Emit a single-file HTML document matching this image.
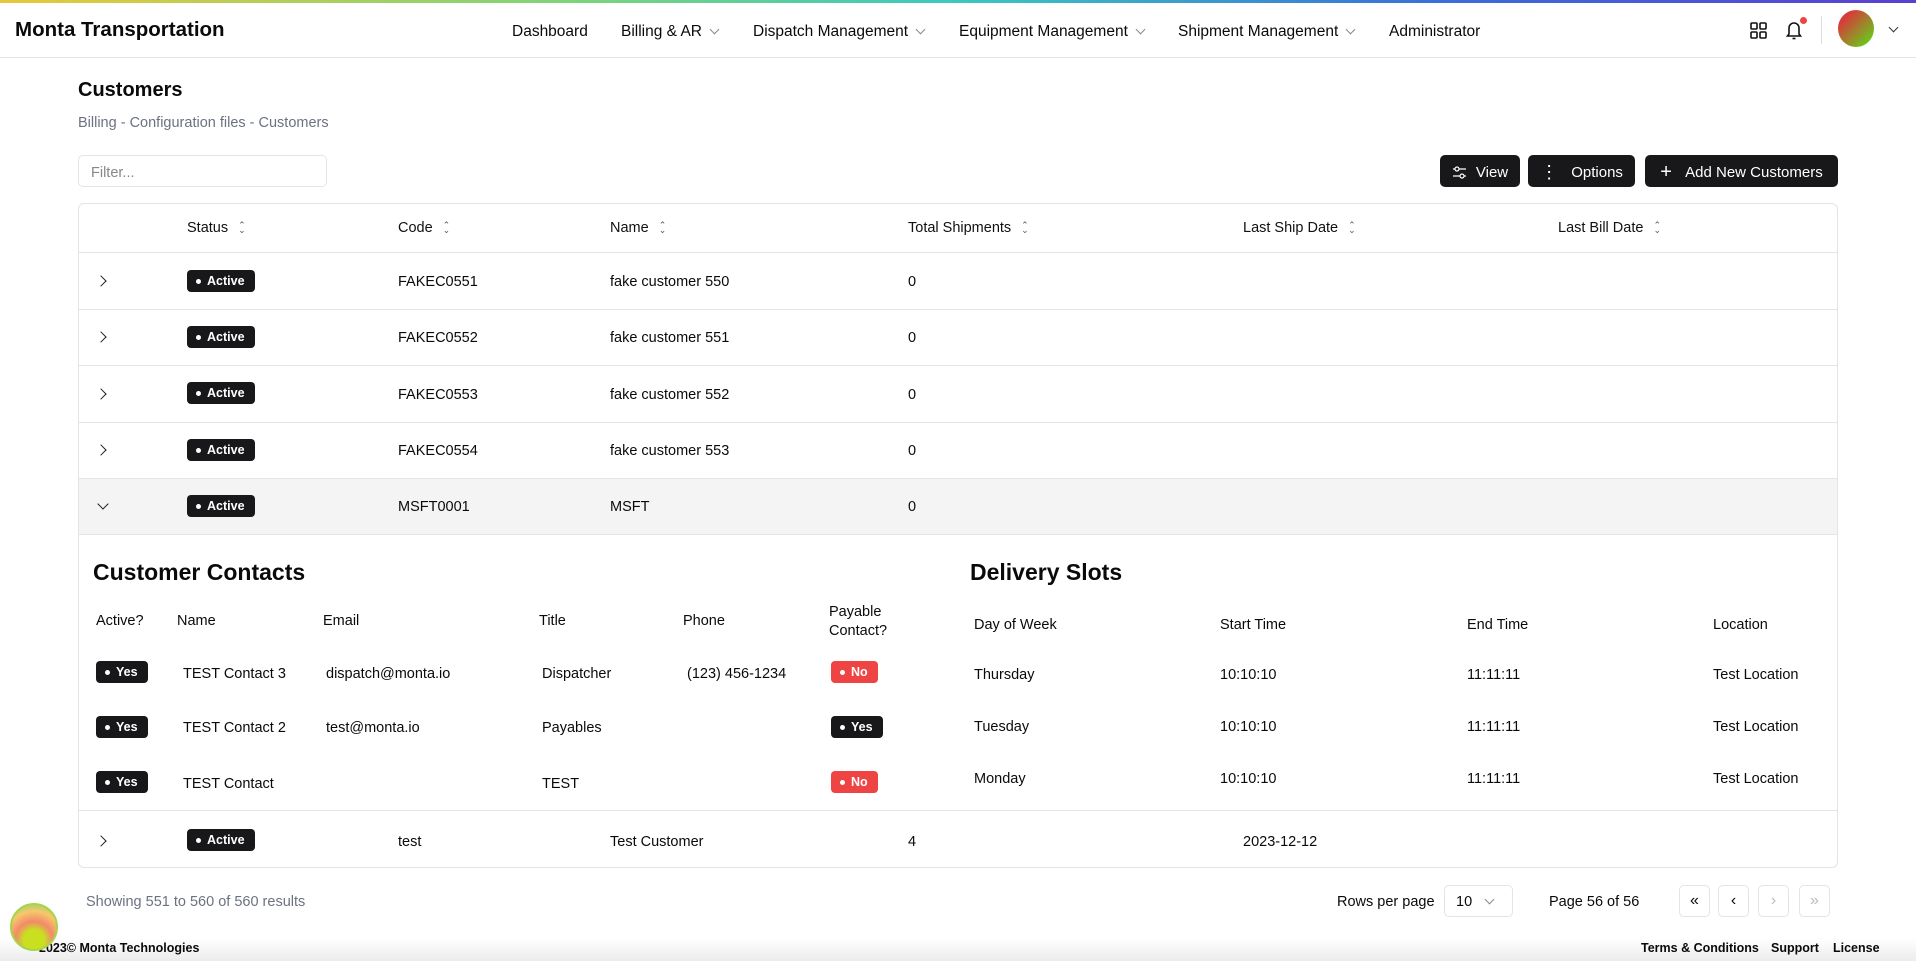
<!DOCTYPE html>
<html><head><meta charset="utf-8"><style>
*{box-sizing:border-box;margin:0;padding:0}
body{width:1916px;height:961px;overflow:hidden;background:#fff;font-family:"Liberation Sans",sans-serif;color:#0a0a0a;position:relative;font-size:15px}
.abs{position:absolute;white-space:nowrap}
.topbar{position:absolute;left:0;top:0;width:1916px;height:3px;background:linear-gradient(90deg,#e8c83a,#7cd47a 30%,#3cc7c0 50%,#3a6fd8 75%,#5b3fd0)}
.hdr{position:absolute;left:0;top:0;width:1916px;height:58px;border-bottom:1px solid #e4e4e7}
.nav{font-size:15.5px;top:23px}
.chev{display:inline-block;width:7px;height:7px;border-right:1.3px solid #888;border-bottom:1.3px solid #888;transform:rotate(45deg);margin-left:9px;position:relative;top:-3px}
.btn{position:absolute;top:155px;height:32px;background:#18181b;color:#fff;border-radius:5px;font-size:15px;display:flex;align-items:center;justify-content:center;gap:9px;padding-top:2px}
.tbl{position:absolute;left:78px;top:203px;width:1760px;height:665px;border:1px solid #e4e4e7;border-radius:6px;overflow:hidden}
.hr{position:absolute;left:0;width:1760px;border-top:1px solid #e4e4e7}
.th{font-size:14.5px;color:#111}
.sort{display:inline-block;margin-left:10px;font-size:9px;color:#555;line-height:5px;vertical-align:middle}
.td{font-size:14.5px;margin-top:2px}
.badge{position:absolute;background:#18181b;color:#fff;font-size:12.5px;font-weight:bold;border-radius:4px;height:22px;display:flex;align-items:center;padding:0 10px 0 9px;gap:6px}
.badge:before{content:"";width:5px;height:5px;border-radius:50%;background:#fff}
.red{background:#ef4444}
.rc{display:inline-block;width:8px;height:8px;border-right:1.5px solid #222;border-bottom:1.5px solid #222;transform:rotate(-45deg)}
.pg{position:absolute;top:885px;width:31px;height:32px;border:1px solid #e4e4e7;border-radius:5px;display:flex;align-items:center;justify-content:center;font-size:16px}
</style></head><body>
<div class="hdr"></div><div class="topbar"></div>
<div class="abs" style="left:15px;top:18px;font-size:20.5px;font-weight:bold">Monta Transportation</div>
<div class="abs nav" style="left:512px">Dashboard</div>
<div class="abs nav" style="left:621px">Billing &amp; AR<span class="chev"></span></div>
<div class="abs nav" style="left:753px">Dispatch Management<span class="chev"></span></div>
<div class="abs nav" style="left:959px">Equipment Management<span class="chev"></span></div>
<div class="abs nav" style="left:1178px">Shipment Management<span class="chev"></span></div>
<div class="abs nav" style="left:1389px">Administrator</div>
<svg class="abs" style="left:1750px;top:22px" width="17" height="17" viewBox="0 0 17 17" fill="none" stroke="#111" stroke-width="1.6"><rect x="1" y="1" width="6" height="6" rx="1"/><rect x="10" y="1" width="6" height="6" rx="1"/><rect x="1" y="10" width="6" height="6" rx="1"/><rect x="10" y="10" width="6" height="6" rx="1"/></svg>
<svg class="abs" style="left:1785px;top:20px" width="18" height="20" viewBox="0 0 18 20" fill="none" stroke="#111" stroke-width="1.6"><path d="M4 14V8a5 5 0 0 1 10 0v6l1.5 2h-13z"/><path d="M7.5 18.5h3"/></svg>
<div class="abs" style="left:1800px;top:17px;width:7px;height:7px;border-radius:50%;background:#ef4444"></div>
<div class="abs" style="left:1821px;top:16px;width:1px;height:28px;background:#ddd"></div>
<div class="abs" style="left:1838px;top:10px;width:36px;height:37px;border-radius:50%;background:linear-gradient(135deg,#d93a3a 20%,#6cc41c 85%)"></div>
<div class="abs" style="left:1890px;top:24px;width:7px;height:7px;border-right:1.5px solid #333;border-bottom:1.5px solid #333;transform:rotate(45deg)"></div>

<div class="abs" style="left:78px;top:79px;font-size:20px;font-weight:bold">Customers</div>
<div class="abs" style="left:78px;top:115px;font-size:14.5px;color:#6b7280">Billing - Configuration files - Customers</div>
<div class="abs" style="left:78px;top:155px;width:249px;height:32px;border:1px solid #e4e4e7;border-radius:5px;font-size:14.5px;color:#888;padding:9px 12px">Filter...</div>
<div class="btn" style="left:1440px;width:80px"><svg width="15" height="13" viewBox="0 0 15 13" fill="none" stroke="#fff" stroke-width="1.2"><path d="M1 3h13M1 10h13"/><circle cx="5" cy="3" r="2" fill="#18181b"/><circle cx="10" cy="10" r="2" fill="#18181b"/></svg>View</div>
<div class="btn" style="left:1528px;width:107px"><span style="font-size:18px;line-height:1">⋮</span>&nbsp;Options</div>
<div class="btn" style="left:1645px;width:193px"><span style="font-size:20px;font-weight:300">+</span>&nbsp;Add New Customers</div>

<div class="tbl">
<div class="hr" style="top:48px"></div>
<div class="hr" style="top:105px"></div>
<div class="hr" style="top:161px"></div>
<div class="hr" style="top:218px"></div>
<div style="position:absolute;left:0;top:274px;width:1760px;height:57px;background:#f4f4f5;border-top:1px solid #e4e4e7;border-bottom:1px solid #e4e4e7"></div>
<div class="hr" style="top:606px"></div>
</div>
<div class="abs th" style="left:187px;top:220px">Status<span class="sort">⌃<br>⌄</span></div>
<div class="abs th" style="left:398px;top:220px">Code<span class="sort">⌃<br>⌄</span></div>
<div class="abs th" style="left:610px;top:220px">Name<span class="sort">⌃<br>⌄</span></div>
<div class="abs th" style="left:908px;top:220px">Total Shipments<span class="sort">⌃<br>⌄</span></div>
<div class="abs th" style="left:1243px;top:220px">Last Ship Date<span class="sort">⌃<br>⌄</span></div>
<div class="abs th" style="left:1558px;top:220px">Last Bill Date<span class="sort">⌃<br>⌄</span></div>

<div class="abs" style="left:97px;top:272px"><span class="rc"></span></div>
<div class="badge" style="left:187px;top:270px">Active</div>
<div class="abs td" style="left:398px;top:272px">FAKEC0551</div><div class="abs td" style="left:610px;top:272px">fake customer 550</div><div class="abs td" style="left:908px;top:272px">0</div>

<div class="abs" style="left:97px;top:328px"><span class="rc"></span></div>
<div class="badge" style="left:187px;top:326px">Active</div>
<div class="abs td" style="left:398px;top:328px">FAKEC0552</div><div class="abs td" style="left:610px;top:328px">fake customer 551</div><div class="abs td" style="left:908px;top:328px">0</div>

<div class="abs" style="left:97px;top:385px"><span class="rc"></span></div>
<div class="badge" style="left:187px;top:382px">Active</div>
<div class="abs td" style="left:398px;top:385px">FAKEC0553</div><div class="abs td" style="left:610px;top:385px">fake customer 552</div><div class="abs td" style="left:908px;top:385px">0</div>

<div class="abs" style="left:97px;top:441px"><span class="rc"></span></div>
<div class="badge" style="left:187px;top:439px">Active</div>
<div class="abs td" style="left:398px;top:441px">FAKEC0554</div><div class="abs td" style="left:610px;top:441px">fake customer 553</div><div class="abs td" style="left:908px;top:441px">0</div>

<div class="abs" style="left:99px;top:495px"><span class="rc" style="transform:rotate(45deg)"></span></div>
<div class="badge" style="left:187px;top:495px">Active</div>
<div class="abs td" style="left:398px;top:497px">MSFT0001</div><div class="abs td" style="left:610px;top:497px">MSFT</div><div class="abs td" style="left:908px;top:497px">0</div>

<div class="abs" style="left:93px;top:559px;font-size:23px;font-weight:bold">Customer Contacts</div>
<div class="abs" style="left:970px;top:559px;font-size:23px;font-weight:bold">Delivery Slots</div>
<div class="abs td" style="left:96px;top:611px">Active?</div>
<div class="abs td" style="left:177px;top:611px">Name</div>
<div class="abs td" style="left:323px;top:611px">Email</div>
<div class="abs td" style="left:539px;top:611px">Title</div>
<div class="abs td" style="left:683px;top:611px">Phone</div>
<div class="abs td" style="left:829px;top:601px;line-height:19px">Payable<br>Contact?</div>

<div class="badge" style="left:96px;top:661px">Yes</div>
<div class="abs td" style="left:183px;top:664px">TEST Contact 3</div><div class="abs td" style="left:326px;top:664px">dispatch@monta.io</div><div class="abs td" style="left:542px;top:664px">Dispatcher</div><div class="abs td" style="left:687px;top:664px">(123) 456-1234</div>
<div class="badge red" style="left:831px;top:661px">No</div>
<div class="badge" style="left:96px;top:716px">Yes</div>
<div class="abs td" style="left:183px;top:718px">TEST Contact 2</div><div class="abs td" style="left:326px;top:718px">test@monta.io</div><div class="abs td" style="left:542px;top:718px">Payables</div>
<div class="badge" style="left:831px;top:716px">Yes</div>
<div class="badge" style="left:96px;top:771px">Yes</div>
<div class="abs td" style="left:183px;top:774px">TEST Contact</div><div class="abs td" style="left:542px;top:774px">TEST</div>
<div class="badge red" style="left:831px;top:771px">No</div>

<div class="abs td" style="left:974px;top:615px">Day of Week</div><div class="abs td" style="left:1220px;top:615px">Start Time</div><div class="abs td" style="left:1467px;top:615px">End Time</div><div class="abs td" style="left:1713px;top:615px">Location</div>
<div class="abs td" style="left:974px;top:665px">Thursday</div><div class="abs td" style="left:1220px;top:665px">10:10:10</div><div class="abs td" style="left:1467px;top:665px">11:11:11</div><div class="abs td" style="left:1713px;top:665px">Test Location</div>
<div class="abs td" style="left:974px;top:717px">Tuesday</div><div class="abs td" style="left:1220px;top:717px">10:10:10</div><div class="abs td" style="left:1467px;top:717px">11:11:11</div><div class="abs td" style="left:1713px;top:717px">Test Location</div>
<div class="abs td" style="left:974px;top:769px">Monday</div><div class="abs td" style="left:1220px;top:769px">10:10:10</div><div class="abs td" style="left:1467px;top:769px">11:11:11</div><div class="abs td" style="left:1713px;top:769px">Test Location</div>

<div class="abs" style="left:97px;top:832px"><span class="rc"></span></div>
<div class="badge" style="left:187px;top:829px">Active</div>
<div class="abs td" style="left:398px;top:832px">test</div><div class="abs td" style="left:610px;top:832px">Test Customer</div><div class="abs td" style="left:908px;top:832px">4</div><div class="abs td" style="left:1243px;top:832px">2023-12-12</div>

<div class="abs" style="left:86px;top:894px;font-size:14.5px;color:#6b7280">Showing 551 to 560 of 560 results</div>
<div class="abs" style="left:1337px;top:894px;font-size:14.5px">Rows per page</div>
<div class="abs" style="left:1444px;top:885px;width:69px;height:32px;border:1px solid #e4e4e7;border-radius:5px;font-size:14.5px;padding:8px 11px">10<span class="chev" style="margin-left:14px"></span></div>
<div class="abs" style="left:1549px;top:894px;font-size:14.5px">Page 56 of 56</div>
<div class="pg" style="left:1679px">«</div>
<div class="pg" style="left:1718px">‹</div>
<div class="pg" style="left:1758px;color:#bbb">›</div>
<div class="pg" style="left:1799px;color:#bbb">»</div>

<div style="position:absolute;left:0;top:938px;width:1916px;height:23px;background:linear-gradient(#fff,#ececec)"></div>
<div class="abs" style="left:39px;top:941px;font-size:12.5px;font-weight:bold">2023© Monta Technologies</div>
<div class="abs" style="left:1641px;top:941px;font-size:12.5px;font-weight:bold">Terms &amp; Conditions</div>
<div class="abs" style="left:1771px;top:941px;font-size:12.5px;font-weight:bold">Support</div>
<div class="abs" style="left:1833px;top:941px;font-size:12.5px;font-weight:bold">License</div>
<div class="abs" style="left:10px;top:903px;width:48px;height:48px;border-radius:50%;background:radial-gradient(circle at 50% 80%,#c8e020 25%,#f28a6a 45%,#f7c86a 70%,#9fd46a 90%);border:2px solid #a8d44c"></div>
</body></html>
